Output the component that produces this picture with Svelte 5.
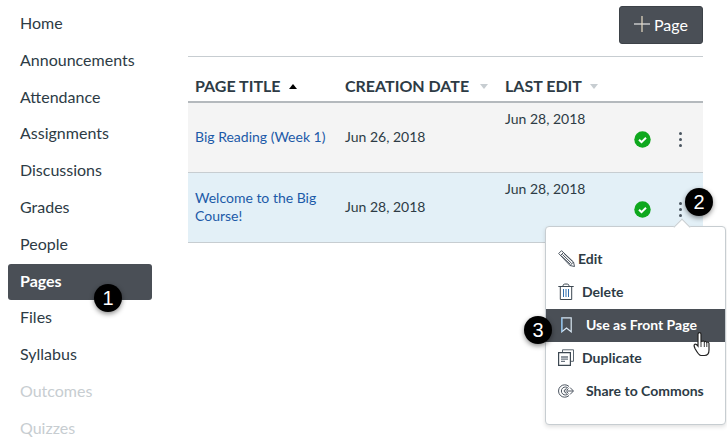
<script lang="ts">
  const navItems = [
    { label: "Home" },
    { label: "Announcements" },
    { label: "Attendance" },
    { label: "Assignments" },
    { label: "Discussions" },
    { label: "Grades" },
    { label: "People" },
    { label: "Pages", active: true },
    { label: "Files" },
    { label: "Syllabus" },
    { label: "Outcomes", muted: true },
    { label: "Quizzes", muted: true }
  ];

  const rows = [
    { title: "Big Reading (Week 1)", created: "Jun 26, 2018", edited: "Jun 28, 2018", selected: false },
    { title: "Welcome to the Big Course!", created: "Jun 28, 2018", edited: "Jun 28, 2018", selected: true }
  ];
</script>

<div class="page">
  <nav class="sidebar">
    {#each navItems as item}
      <div class="nav-item" class:active={item.active} class:muted={item.muted}>{item.label}</div>
    {/each}
  </nav>

  <main class="content">
    <div class="toolbar">
      <button class="add-btn">
        <svg width="16" height="16" viewBox="0 0 16 16"><path d="M0 8h16" stroke="#e6e6e6" stroke-width="1.2" fill="none" /><path d="M8 0v16" stroke="#e8dcc4" stroke-width="1.2" fill="none" /></svg>
        Page
      </button>
    </div>

    <div class="table-head grid-row">
      <div class="th">PAGE TITLE <span class="caret dark"></span></div>
      <div class="th">CREATION DATE <span class="caret"></span></div>
      <div class="th">LAST EDIT <span class="caret"></span></div>
    </div>

    {#each rows as row}
      <div class="table-row grid-row" class:selected={row.selected}>
        <a class="title" href="#top">{row.title}</a>
        <div class="date">{row.created}</div>
        <div class="date edited">{row.edited}</div>
        <div class="status">
          <svg width="17" height="17" viewBox="0 0 17 17">
            <circle cx="8.5" cy="8.5" r="8.2" fill="#0fa81e" />
            <path d="M5 8.800l2.500 2.300 4.500-4.400" stroke="#fff" stroke-width="2" fill="none" />
          </svg>
        </div>
        <div class="kebab"><i></i><i></i><i></i></div>
      </div>
    {/each}
  </main>

  <div class="menu">
    <div class="menu-arrow"></div>
    <div class="menu-item">
      <svg class="ico" width="17" height="17" viewBox="0 0 17 17" fill="none" stroke="#4c5560" stroke-width="1">
        <path d="M.7 3.500L3.500.7 15.500 12l1 4.500-4.500-1z" />
        <path d="M2.500 5.500l3-3M12 15.500l3.500-3.500M4.500 4.500l9 8.800M3.500 6l8.500 8M6 3.500l8.500 8" />
      </svg>
      <span>Edit</span>
    </div>
    <div class="menu-item">
      <svg class="ico wide" width="16" height="17" viewBox="0 0 16 17" fill="none" stroke="#3d4852" stroke-width="1">
        <path d="M.3 3.500h15.400M5 3.500C5 1.500 5.500 1 8 1s3 .5 3 2.500M2.300 3.500V16.500h11.400V3.500" />
        <path d="M5.500 6v8M8 6v8M10.500 6v8" stroke="#2f6fb0" />
      </svg>
      <span>Delete</span>
    </div>
    <div class="menu-item hot">
      <svg class="ico wider" width="11" height="16" viewBox="0 0 11 16" fill="none" stroke="#d8e6f2" stroke-width="1.200">
        <path d="M.8.800h9.400v14L5.500 11 .8 14.800z" />
        <path d="M.8.800v14" stroke="#7fb8e8" />
      </svg>
      <span>Use as Front Page</span>
    </div>
    <div class="menu-item">
      <svg class="ico wide" width="16" height="17" viewBox="0 0 16 17" fill="none" stroke="#3d4852" stroke-width="1.200">
        <path d="M4.500 3V.8h11v11.500h-3" stroke="#5b6670" stroke-width="1" />
        <path d="M.6 3.600h11.800v12.800H.6z" />
        <path d="M3 8h7M3 10.200h7M3 12.400h4" stroke="#6b7580" stroke-width="1.300" />
      </svg>
      <span>Duplicate</span>
    </div>
    <div class="menu-item">
      <svg class="ico wider" width="16" height="14" viewBox="0 0 16 14" fill="none" stroke="#4c5560" stroke-width="1">
        <path d="M11 2.500A6.200 6.200 0 1 0 11 11.500M10.500 4.500a4 4 0 1 0 0 5M10 6a2 2 0 1 0 0 2" />
        <path d="M7.500 7h7.500M12 3.500l3.500 3.500-3.500 3.500" />
      </svg>
      <span>Share to Commons</span>
    </div>
  </div>

  <svg class="cursor" width="20" height="26" viewBox="0 0 20 26">
    <path d="M6 13V3.200a1.500 1.500 0 0 1 3 0V10.500l1.500-.3a1.400 1.400 0 0 1 2 .6 1.400 1.400 0 0 1 2.200.6 1.400 1.400 0 0 1 2.300 1.100V19c0 3-1.600 5.500-4.500 5.500H9C6.800 24.500 5.500 22 3 17.500 2 15.500 1.500 14 2.800 13.300 4 12.700 5 13.800 6 15z" fill="#fff" stroke="#222" stroke-width="1.200" />
    <path d="M9 11v5M12.300 11v5M14.800 12v4" stroke="#222" stroke-width="0.900" fill="none" />
  </svg>

  <div class="badge b1">1</div>
  <div class="badge b2">2</div>
  <div class="badge b3">3</div>
</div>

<style>
  :global(body) {
    margin: 0;
    background: #fff;
  }

  .page {
    position: relative;
    width: 727px;
    height: 447px;
    overflow: hidden;
    display: flex;
    font-family: Lato, "Liberation Sans", sans-serif;
    color: #2d3b45;
    font-size: 14px;
  }

  .sidebar {
    width: 144px;
    margin: 5px 36px 0 8px;
    flex: none;
    display: flex;
    flex-direction: column;
  }

  .nav-item {
    flex: none;
    height: 36px;
    margin-bottom: 0.8px;
    padding-left: 12px;
    line-height: 36px;
    font-size: 16px;
    border-radius: 3px;
  }

  .nav-item.active {
    background: #4a4f56;
    color: #fff;
    font-weight: 700;
    margin-top: 1px;
    margin-bottom: -0.2px;
    line-height: 34px;
  }

  .nav-item.muted {
    color: #c7cdd1;
  }

  .content {
    width: 515px;
    flex: none;
  }

  .toolbar {
    display: flex;
    justify-content: flex-end;
    padding-top: 6px;
    box-sizing: border-box;
    border-bottom: 1px solid #c7cdd1;
    height: 57px;
  }

  .add-btn {
    width: 84px;
    height: 38px;
    background: #4a4f56;
    border: 1px solid #3d4248;
    border-radius: 3px;
    color: #fff;
    font: 16px Lato, sans-serif;
    display: flex;
    align-items: center;
    justify-content: center;
    gap: 4px;
    padding: 0 0 2px;
  }

  .grid-row {
    display: grid;
    grid-template-columns: 150px 160px 118px 38px 38px;
    box-sizing: border-box;
    padding-left: 7px;
  }

  .table-head {
    align-items: end;
    padding-bottom: 5px;
    border-bottom: 2px solid #b4b9bd;
    height: 46px;
  }

  .th {
    font-size: 16px;
    font-weight: 700;
    white-space: nowrap;
    line-height: 20px;
  }

  .caret {
    display: inline-block;
    vertical-align: middle;
    margin: 0 0 3px 5px;
    border-left: 4px solid transparent;
    border-right: 4px solid transparent;
    border-bottom: 5px solid #c7cdd1;
  }

  .caret.dark {
    border-bottom-color: #000;
  }

  .th:nth-child(2) .caret,
  .th:nth-child(3) .caret {
    border-bottom: 0;
    border-top: 5px solid #c7cdd1;
    margin-bottom: 2px;
  }

  .th:nth-child(2) .caret {
    margin-left: 7px;
  }

  .table-row {
    height: 70px;
    padding-bottom: 2px;
    background: #f4f4f4;
    border-bottom: 1px solid #c7cdd1;
    align-items: center;
  }

  .table-row.selected {
    background: #e3f0f7;
    border-bottom-color: #c7cdd1;
  }

  .title {
    color: #1c5aa8;
    text-decoration: none;
    line-height: 18px;
    padding-right: 8px;
  }

  .date {
    font-size: 14px;
  }

  .edited {
    align-self: start;
    margin-top: 7px;
  }

  .status {
    display: flex;
    justify-content: center;
    padding-top: 5px;
  }

  .kebab {
    display: flex;
    flex-direction: column;
    align-items: center;
    gap: 3px;
    padding-top: 5px;
  }

  .kebab i {
    width: 3px;
    height: 3px;
    border-radius: 50%;
    background: #4a5560;
  }

  .menu {
    position: absolute;
    left: 545px;
    top: 226px;
    width: 179px;
    padding: 16px 0 16px;
    background: #fff;
    border: 1px solid #c7cdd1;
    border-radius: 4px;
    box-shadow: 0 2px 4px rgba(0, 0, 0, 0.12);
  }

  .menu-arrow {
    position: absolute;
    top: -6px;
    left: 130px;
    width: 11px;
    height: 11px;
    background: #fff;
    border-top: 1px solid #c7cdd1;
    border-left: 1px solid #c7cdd1;
    transform: rotate(45deg);
  }

  .menu-item {
    height: 33px;
    box-sizing: border-box;
    padding-bottom: 2px;
    display: flex;
    align-items: center;
    padding-left: 12px;
    font-weight: 700;
    font-size: 14px;
    position: relative;
  }

  .menu-item span {
    margin-left: 3px;
  }

  .ico.wide + span {
    margin-left: 8px;
  }

  .ico.wider + span {
    margin-left: 12px;
  }

  .menu-item.hot {
    background: #4a4f56;
    color: #fff;
  }

  .menu-item.hot .ico {
    margin-left: 3px;
    margin-right: 14px;
  }

  .menu-item.hot .ico + span {
    margin-left: 0;
  }

  .cursor {
    position: absolute;
    left: 692px;
    top: 331px;
  }

  .badge {
    position: absolute;
    width: 28px;
    height: 28px;
    border-radius: 50%;
    background: #000;
    color: #fff;
    font: 20px/28px "Liberation Sans", sans-serif;
    text-align: center;
    box-shadow: 0 2px 5px rgba(0, 0, 0, 0.45);
  }

  .b1 { left: 94px; top: 284px; }
  .b2 { left: 685px; top: 188px; }
  .b3 { left: 524px; top: 316px; }
</style>
